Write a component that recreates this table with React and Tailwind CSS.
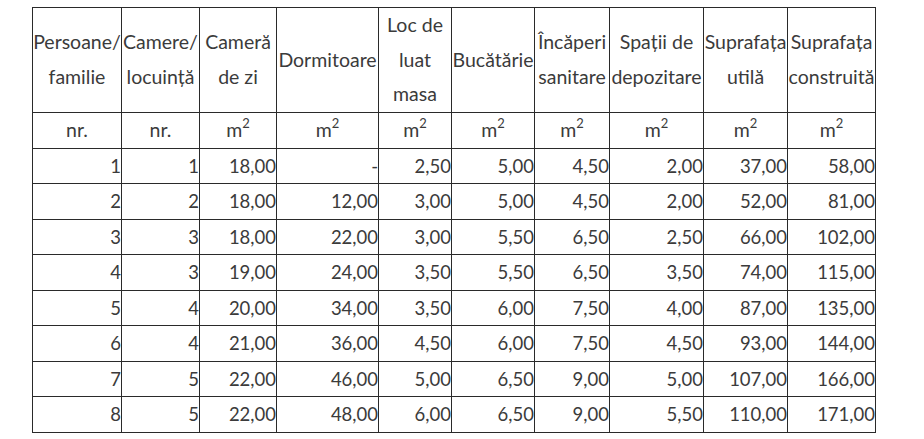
import React from 'react';

const cols = [89, 78, 77, 102, 73, 83, 75, 94, 84, 88];

const headers = [
  ['Persoane/', 'familie'],
  ['Camere/', 'locuință'],
  ['Cameră', 'de zi'],
  ['Dormitoare'],
  ['Loc de', 'luat', 'masa'],
  ['Bucătărie'],
  ['Încăperi', 'sanitare'],
  ['Spații de', 'depozitare'],
  ['Suprafața', 'utilă'],
  ['Suprafața', 'construită'],
];

const rows = [
  ['1', '1', '18,00', '-', '2,50', '5,00', '4,50', '2,00', '37,00', '58,00'],
  ['2', '2', '18,00', '12,00', '3,00', '5,00', '4,50', '2,00', '52,00', '81,00'],
  ['3', '3', '18,00', '22,00', '3,00', '5,50', '6,50', '2,50', '66,00', '102,00'],
  ['4', '3', '19,00', '24,00', '3,50', '5,50', '6,50', '3,50', '74,00', '115,00'],
  ['5', '4', '20,00', '34,00', '3,50', '6,00', '7,50', '4,00', '87,00', '135,00'],
  ['6', '4', '21,00', '36,00', '4,50', '6,00', '7,50', '4,50', '93,00', '144,00'],
  ['7', '5', '22,00', '46,00', '5,00', '6,50', '9,00', '5,00', '107,00', '166,00'],
  ['8', '5', '22,00', '48,00', '6,00', '6,50', '9,00', '5,50', '110,00', '171,00'],
];

const cell = 'border border-[#2a2a2a] p-0 whitespace-nowrap overflow-visible';

export default function App() {
  return (
    <div className="w-[924px] h-[439px] bg-white pt-[7px] pl-[32px]" style={{ fontFamily: 'Lato, "Open Sans", sans-serif' }}>
      <table className="table-fixed border-collapse w-[843px] text-[18.5px] leading-[34.5px] text-[#3b3b3b]">
        <colgroup>
          {cols.map((w, i) => (
            <col key={i} style={{ width: w }} />
          ))}
        </colgroup>
        <thead>
          <tr className="h-[104px]">
            {headers.map((h, i) => (
              <th key={i} className={`${cell} font-normal text-[19.5px] text-center align-middle`}>
                {h.map((line, j) => (
                  <div key={j}>{line}</div>
                ))}
              </th>
            ))}
          </tr>
          <tr className="h-[36px]">
            {cols.map((_, i) => (
              <td key={i} className={`${cell} text-[19.5px] text-center align-middle`}>
                {i < 2 ? 'nr.' : (
                  <span>m<sup className="text-[13px] relative -top-[9px]">2</sup></span>
                )}
              </td>
            ))}
          </tr>
        </thead>
        <tbody>
          {rows.map((r, i) => (
            <tr key={i} className="h-[35.5px]">
              {r.map((v, j) => (
                <td key={j} className={`${cell} text-right align-middle`}>{v}</td>
              ))}
            </tr>
          ))}
        </tbody>
      </table>
    </div>
  );
}
